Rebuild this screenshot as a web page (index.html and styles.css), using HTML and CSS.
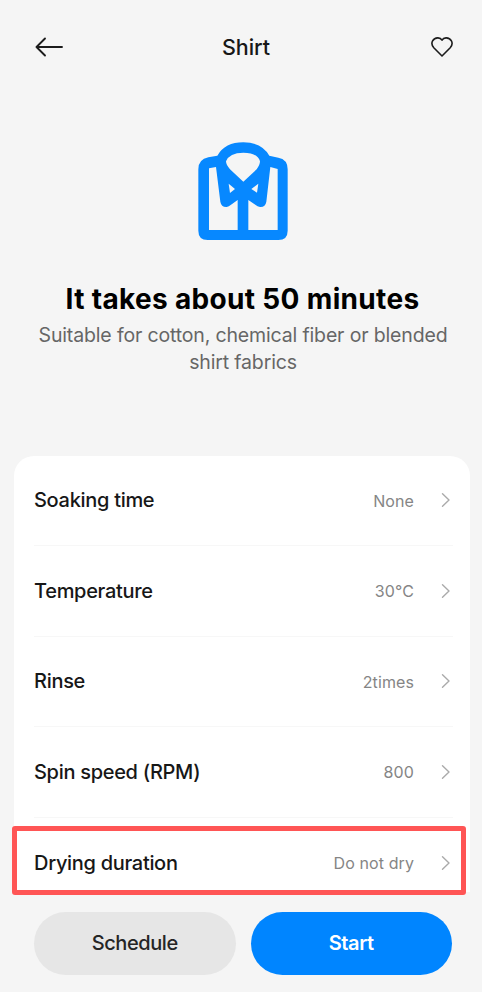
FILE: index.html
```html
<!DOCTYPE html>
<html lang="en">
<head>
<meta charset="utf-8">
<title>Shirt</title>
<link rel="stylesheet" href="styles.css">
</head>
<body>
<main class="screen">
  <header class="topbar">
    <svg class="back" width="30" height="22" viewBox="0 0 30 22"><path d="M11 2.500L2.500 11L11 19.500M2.500 11H28"/></svg>
    <h1 class="title">Shirt</h1>
    <svg class="heart" width="24" height="22" viewBox="0 0 24 22"><path d="M12 20L3.800 11.800C-.5 7 3.500 1.700 8 1.900C9.800 2 11.200 2.900 12 4.200C12.800 2.900 14.200 2 16 1.900C20.500 1.700 24.500 7 20.200 11.800Z"/></svg>
  </header>
  <section class="hero">
    <svg class="shirt" width="90" height="99" viewBox="54 36 270 297"><path fill-rule="evenodd" d="M55 118Q55 88 85 82L112 77Q135 37 190 37Q245 37 268 77L295 83Q323 88 323 118V302Q323 330 295 330H83Q55 330 55 302ZM87 115V300H173V210L152 225Q147 230 140 231Q124 232 121 215L108 111ZM293 117V300H205V210L227 225Q232 230 240 231Q256 232 259 215L271 111ZM190 155L150 118Q138 104 138 94Q148 68 190 68Q232 68 240 94Q240 104 230 118ZM146 161L165 177L150 189ZM235 161L214 177L231 188Z"/></svg>
    <h2 class="duration">It takes about 50 minutes</h2>
    <p class="summary">Suitable for cotton, chemical fiber or blended<br>shirt fabrics</p>
  </section>
  <section class="card">
    <div class="row"><span class="label">Soaking time</span><span class="value">None</span><svg class="chevron" viewBox="0 0 10 16"><path d="M1.500 1.800L8 8L1.500 14.200"/></svg></div>
    <div class="row"><span class="label">Temperature</span><span class="value">30°C</span><svg class="chevron" viewBox="0 0 10 16"><path d="M1.500 1.800L8 8L1.500 14.200"/></svg></div>
    <div class="row"><span class="label">Rinse</span><span class="value">2times</span><svg class="chevron" viewBox="0 0 10 16"><path d="M1.500 1.800L8 8L1.500 14.200"/></svg></div>
    <div class="row"><span class="label">Spin speed (RPM)</span><span class="value">800</span><svg class="chevron" viewBox="0 0 10 16"><path d="M1.500 1.800L8 8L1.500 14.200"/></svg></div>
    <div class="row last"><span class="label">Drying duration</span><span class="value">Do not dry</span><svg class="chevron" viewBox="0 0 10 16"><path d="M1.500 1.800L8 8L1.500 14.200"/></svg><div class="highlight"></div></div>
  </section>
  <footer class="actions">
    <button class="button schedule">Schedule</button>
    <button class="button start">Start</button>
  </footer>
</main>
</body>
</html>
```
FILE: styles.css
```css
* { box-sizing: border-box; }
body { margin: 0; background: #f5f5f5; font-family: Inter, "Liberation Sans", sans-serif; color: #171717; }
h1, h2, p { margin: 0; }
.screen { width: 482px; height: 992px; overflow: hidden; display: flex; flex-direction: column; }
.topbar { height: 94px; padding: 0 28px 0 34px; display: grid; grid-template-columns: 30px 1fr 24px; align-items: center; }
.back, .heart, .chevron { fill: none; stroke: #1c1c1c; stroke-width: 1.9; stroke-linecap: round; stroke-linejoin: round; }
.heart { stroke-width: 1.6; }
.title { text-align: center; font-size: 21.5px; font-weight: 500; line-height: 30px; padding-right: 2px; }
.hero { height: 361.5px; padding-top: 48px; display: flex; flex-direction: column; align-items: center; text-align: center; }
.shirt { fill: #0788ff; margin-left: 4px; }
.duration { margin-top: 39px; margin-left: 3px; font-size: 28px; line-height: 38px; font-weight: 700; letter-spacing: .33px; color: #000; white-space: nowrap; }
.summary { margin-top: 4px; margin-left: 4px; font-size: 19.5px; line-height: 27px; letter-spacing: -.15px; color: #666; white-space: nowrap; }
.card { width: 456px; height: 436.5px; margin-left: 14px; padding: 0 17px 0 20px; background: #fff; border-radius: 20px 20px 0 0; }
.row { height: 90.5px; display: flex; align-items: center; border-bottom: 1px solid #f7f7f7; position: relative; }
.row.last { height: 74.5px; padding-top: 16px; border: 0; }
.label { flex: 1; font-size: 20px; line-height: 28px; font-weight: 500; letter-spacing: -.3px; }
.value { padding-top: 1px; font-size: 16px; line-height: 24px; color: #858585; letter-spacing: .1px; }
.chevron { width: 10px; height: 16px; margin: 0 2px 0 27px; stroke: #aaa; stroke-width: 1.4; }
.highlight { position: absolute; left: -22px; top: 8px; width: 454px; height: 69px; border: 5px solid #ff5555; border-radius: 3px; }
.actions { margin-top: 20px; padding: 0 30px 0 34px; display: flex; gap: 15px; }
.button { width: 201.5px; height: 62.5px; border: 0; border-radius: 32px; padding: 0; font: 500 20px/28px Inter, "Liberation Sans", sans-serif; letter-spacing: -.4px; }
.schedule { background: #e6e6e6; color: #252525; }
.start { background: #0085ff; color: #fff; font-weight: 600; }
```
